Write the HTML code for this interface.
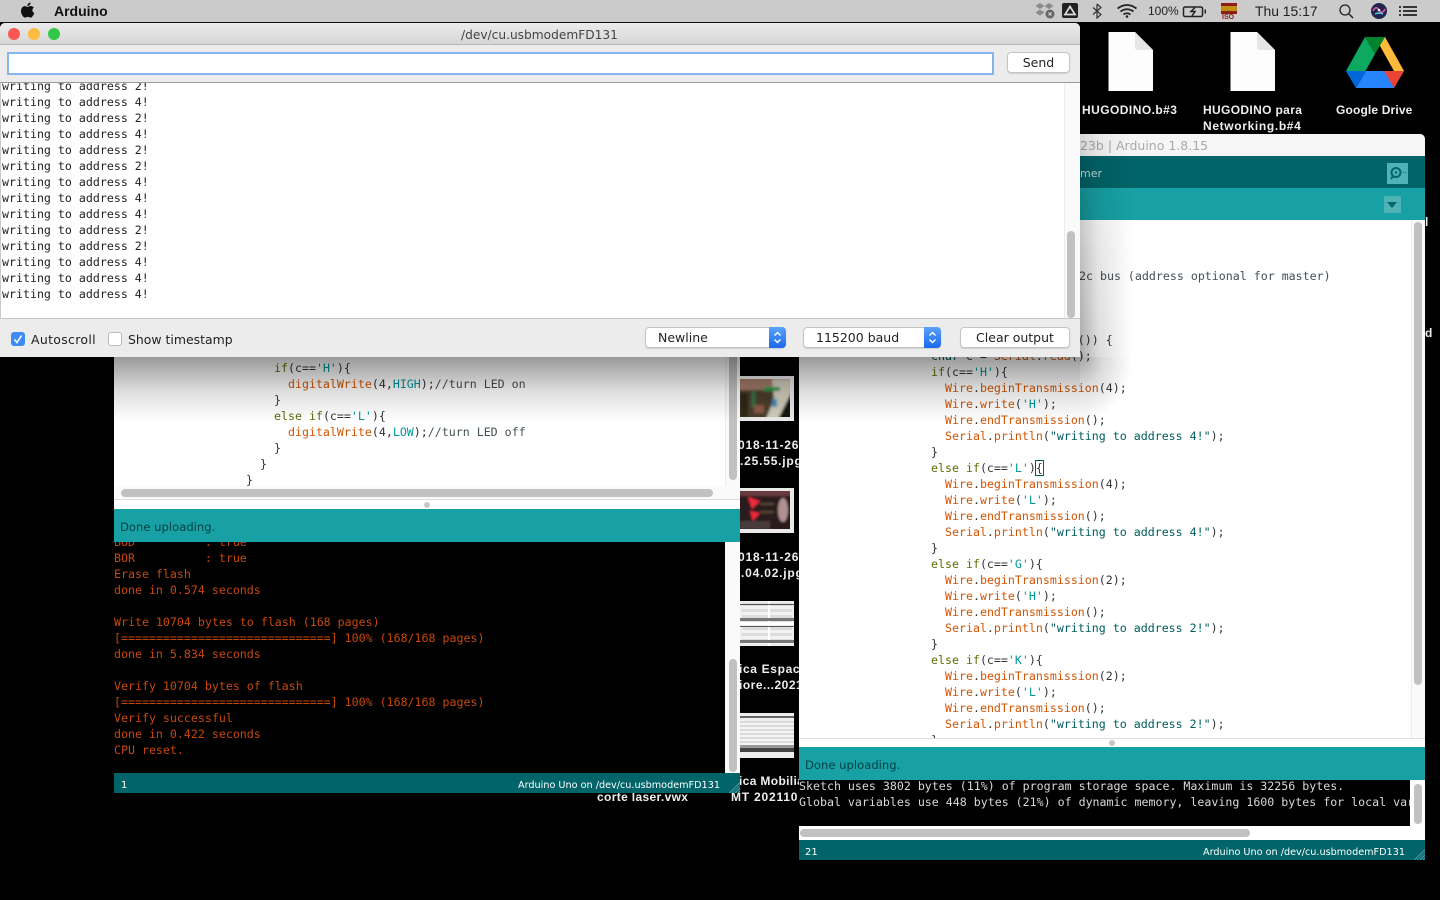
<!DOCTYPE html>
<html><head><meta charset="utf-8"><style>
html,body{margin:0;padding:0;background:#000;width:1440px;height:900px;overflow:hidden}
.a{position:absolute}
pre{position:absolute;margin:0;font:11.62px/16px "DejaVu Sans Mono","Liberation Mono",monospace;color:#333}
.s{font-family:"DejaVu Sans","Liberation Sans",sans-serif;white-space:pre}
.b{font:bold 12px/16px "Liberation Sans",sans-serif;color:#eee;white-space:pre;position:absolute;letter-spacing:.45px}
.k{color:#5E6D03}.f{color:#D35400}.c{color:#00979C}.t{color:#005C5F}.m{color:#434F54}
.btn{position:absolute;background:#fff;border:1px solid #c4c4c4;border-radius:4px;box-sizing:border-box;font:12.5px/20px "DejaVu Sans",sans-serif;color:#222;box-shadow:0 1px 1px rgba(0,0,0,.12)}
.sp{position:absolute;top:-1px;right:-1px;width:17px;height:21px;background:linear-gradient(#5aa2fb,#1a68ee);border-radius:0 4px 4px 0}
.th{position:absolute;left:740px;width:54px;height:45px;overflow:hidden;background:#e9e9e9}
</style></head><body>

<!-- Desktop icons -->
<svg class="a" style="left:1100px;top:26px" width="320" height="70" viewBox="0 0 320 70">
<path d="M8.500 6H35L53 24V65H8.500Z" fill="#fdfdfd"/><path d="M35 6L53 24H38Q35 24 35 21Z" fill="#e6e6e6"/>
<path d="M130.500 6H157L175 24V65H130.500Z" fill="#fdfdfd"/><path d="M157 6L175 24H160Q157 24 157 21Z" fill="#e6e6e6"/>
<path d="M265 11H285L304 45L294 45L275 11Z" fill="#FFBA3C"/>
<path d="M265 11L246 45L256 62L275 28Z" fill="#0DA960"/>
<path d="M265 11H285L275 28Z" fill="#00832D"/>
<path d="M256 62H294L304 45H266Z" fill="#2684FC"/>
<path d="M246 45L256 62L266 45Z" fill="#0066DA"/>
<path d="M284 45H304L294 62Z" fill="#EA4335"/>
</svg>
<div class="b" style="left:1082px;top:102px">HUGODINO.b#3</div>
<div class="b" style="left:1203px;top:102px;letter-spacing:.35px">HUGODINO para</div>
<div class="b" style="left:1203px;top:118px;letter-spacing:.65px">Networking.b#4</div>
<div class="b" style="left:1336px;top:102px;letter-spacing:.15px">Google Drive</div>

<!-- Thumbnail column -->
<div class="th" style="top:376px"><svg class="a" style="left:0;top:3px" width="50" height="38" viewBox="0 0 50 38"><defs><filter id="bl"><feGaussianBlur stdDeviation="1.200"/></filter></defs><rect width="50" height="38" fill="#4a3c2c"/><g filter="url(#bl)"><rect x="-2" y="-2" width="54" height="42" fill="#4a3c2c"/><rect x="-2" y="-2" width="54" height="13" fill="#a07a68"/><path d="M32 0H52V12L38 40H26L34 20Z" fill="#cfcbbb"/><path d="M38 40L52 14V40Z" fill="#141410"/><rect x="24" y="8" width="16" height="4" fill="#1e9a4a"/><rect x="12" y="12" width="3" height="16" fill="#2a7a4a"/><rect x="32" y="20" width="5" height="8" fill="#3a8ab8"/><rect x="14" y="26" width="10" height="8" fill="#8a5a4a"/><rect x="0" y="14" width="8" height="24" fill="#2e2618"/></g></svg></div>
<div class="th" style="top:488px"><svg class="a" style="left:0;top:3px" width="50" height="38" viewBox="0 0 50 38"><defs><filter id="bm"><feGaussianBlur stdDeviation="1"/></filter></defs><rect width="50" height="38" fill="#2a1c1c"/><g filter="url(#bm)"><rect x="-2" y="-2" width="54" height="42" fill="#2a1c1c"/><rect x="-2" y="-2" width="54" height="7" fill="#6a3a40"/><ellipse cx="43" cy="19" rx="5" ry="12" fill="#b09090"/><rect x="20" y="12" width="14" height="2" fill="#5a4a3a"/><rect x="20" y="20" width="14" height="2" fill="#5a4a3a"/><path d="M8 6L20 10L12 18Z" fill="#f02c3a"/><path d="M10 20L20 22L13 30Z" fill="#f02c3a"/><rect x="0" y="30" width="30" height="8" fill="#4a3a3a"/></g></svg></div>
<div class="th" style="top:601px;background:#eee"><div class="a" style="left:2px;top:2px;width:50px;height:41px;background:repeating-linear-gradient(#dcdcdc 0 3px,#f2f2f2 3px 6px)"></div><div class="a" style="left:28px;top:0;width:2px;height:45px;background:#fff"></div><div class="a" style="left:0;top:21px;width:54px;height:3px;background:#fff"></div><div class="a" style="left:0;top:17px;width:54px;height:3px;background:#777"></div><div class="a" style="left:0;top:39px;width:54px;height:3px;background:#777"></div><div class="a" style="left:0;top:3px;width:54px;height:1px;background:#555"></div><div class="a" style="left:0;top:25px;width:54px;height:1px;background:#555"></div></div>
<div class="th" style="top:713px;background:#eee"><div class="a" style="left:0;top:3px;width:54px;height:2px;background:#666"></div><div class="a" style="left:0;top:8px;width:54px;height:24px;background:repeating-linear-gradient(#dadada 0 2px,#f4f4f4 2px 4px)"></div><div class="a" style="left:0;top:32px;width:54px;height:3px;background:#999"></div><div class="a" style="left:0;top:35px;width:54px;height:4px;background:#444"></div></div>
<div class="a" style="left:740px;top:437px;width:59px;height:370px;overflow:hidden">
<div class="b" style="left:-2px;top:0;letter-spacing:.8px">018-11-26</div>
<div class="b" style="left:0;top:16px;letter-spacing:.8px">.25.55.jpg</div>
<div class="b" style="left:-2px;top:112px;letter-spacing:.8px">018-11-26</div>
<div class="b" style="left:1px;top:128px;letter-spacing:.8px">.04.02.jpg</div>
<div class="b" style="left:-1px;top:224px;letter-spacing:.65px">ica Espac</div>
<div class="b" style="left:-1px;top:240px;letter-spacing:.5px">iore...2021</div>
<div class="b" style="left:-1px;top:336px;letter-spacing:.35px">ica Mobilia</div>
</div>
<div class="b" style="left:731px;top:789px;letter-spacing:.8px">MT 202110</div>
<div class="b" style="left:597px;top:789px;letter-spacing:.35px">corte laser.vwx</div>
<div class="b" style="left:1425px;top:325px">d</div>
<div class="b" style="left:1425px;top:214px">l</div>

<!-- Right Arduino window -->
<div class="a" style="left:799px;top:134px;width:626px;height:726px;background:#fff;overflow:hidden;border-radius:5px 5px 0 0">
 <div class="a" style="left:0;top:0;width:626px;height:22px;background:#f6f6f6"></div>
 <div class="a s" style="left:281px;top:4px;font-size:12.5px;line-height:16px;color:#a9a9a9">23b | Arduino 1.8.15</div>
 <div class="a" style="left:0;top:22px;width:626px;height:32px;background:#006468"></div>
 <div class="a s" style="left:281px;top:32px;font-size:11px;line-height:16px;color:#c4dcdc">mer</div>
 <div class="a" style="left:588px;top:29px;width:21px;height:21px;background:#4eb3b6"></div>
 <svg class="a" style="left:588px;top:29px" width="21" height="21"><circle cx="9" cy="9.500" r="4.500" fill="none" stroke="#006468" stroke-width="2"/><circle cx="9" cy="9.500" r="1.200" fill="#006468"/><path d="M6 13L4 16" stroke="#006468" stroke-width="2"/><path d="M16 9.500h1M18.500 9.500h1" stroke="#006468"/></svg>
 <div class="a" style="left:0;top:54px;width:626px;height:32px;background:#17A1A5"></div>
 <div class="a" style="left:585px;top:62px;width:17px;height:17px;background:#4eb3b6"></div>
 <div class="a" style="left:588px;top:68px;width:0;height:0;border:5.500px solid transparent;border-top:6px solid #006468;border-bottom:0"></div>
 <div class="a" style="left:612px;top:86px;width:14px;height:518px;background:#fafafa;border-left:1px solid #ececec;box-sizing:border-box"></div>
 <div class="a" style="left:615px;top:88px;width:8px;height:463px;background:#c1c1c1;border-radius:4px"></div>
</div>
<pre style="left:1079px;top:268px"><span class="m">2c bus (address optional for master)</span></pre>
<pre style="left:917px;top:332px"><span class="k">while</span> (<span class="f">Serial</span>.<span class="f">available</span>()) {</pre>
<pre style="left:931px;top:348px"><span class="t">char</span> c = <span class="f">Serial</span>.<span class="f">read</span>();</pre>
<div class="a" style="left:799px;top:364px;width:613px;height:374px;overflow:hidden">
<pre style="left:132px;top:0"><span class="k">if</span>(c==<span class="c">'H'</span>){
  <span class="f">Wire</span>.<span class="f">beginTransmission</span>(4);
  <span class="f">Wire</span>.<span class="f">write</span>(<span class="c">'H'</span>);
  <span class="f">Wire</span>.<span class="f">endTransmission</span>();
  <span class="f">Serial</span>.<span class="f">println</span>(<span class="t">"writing to address 4!"</span>);
}
<span class="k">else if</span>(c==<span class="c">'L'</span>){
  <span class="f">Wire</span>.<span class="f">beginTransmission</span>(4);
  <span class="f">Wire</span>.<span class="f">write</span>(<span class="c">'L'</span>);
  <span class="f">Wire</span>.<span class="f">endTransmission</span>();
  <span class="f">Serial</span>.<span class="f">println</span>(<span class="t">"writing to address 4!"</span>);
}
<span class="k">else if</span>(c==<span class="c">'G'</span>){
  <span class="f">Wire</span>.<span class="f">beginTransmission</span>(2);
  <span class="f">Wire</span>.<span class="f">write</span>(<span class="c">'H'</span>);
  <span class="f">Wire</span>.<span class="f">endTransmission</span>();
  <span class="f">Serial</span>.<span class="f">println</span>(<span class="t">"writing to address 2!"</span>);
}
<span class="k">else if</span>(c==<span class="c">'K'</span>){
  <span class="f">Wire</span>.<span class="f">beginTransmission</span>(2);
  <span class="f">Wire</span>.<span class="f">write</span>(<span class="c">'L'</span>);
  <span class="f">Wire</span>.<span class="f">endTransmission</span>();
  <span class="f">Serial</span>.<span class="f">println</span>(<span class="t">"writing to address 2!"</span>);
}</pre>
<div class="a" style="left:236px;top:96px;width:7px;height:14px;border:1px solid #005C5F"></div>
</div>
<div class="a" style="left:799px;top:738px;width:626px;height:1px;background:#ddd"></div>
<div class="a" style="left:1109px;top:740px;width:6px;height:6px;border-radius:50%;background:#c8c8c8"></div>
<div class="a" style="left:799px;top:747px;width:626px;height:33px;background:#17A1A5"></div>
<div class="a s" style="left:805px;top:757px;font-size:11.6px;line-height:16px;color:#034246">Done uploading.</div>
<div class="a" style="left:799px;top:780px;width:611px;height:46px;background:#000;overflow:hidden">
<pre style="left:0;top:-2px;color:#d8d8d8">Sketch uses 3802 bytes (11%) of program storage space. Maximum is 32256 bytes.
Global variables use 448 bytes (21%) of dynamic memory, leaving 1600 bytes for local variables. Maximum is 2048 bytes.</pre>
</div>
<div class="a" style="left:1410px;top:780px;width:15px;height:60px;background:#fff"></div>
<div class="a" style="left:1414px;top:784px;width:8px;height:40px;background:#c1c1c1;border-radius:4px"></div>
<div class="a" style="left:799px;top:826px;width:626px;height:14px;background:#fff"></div>
<div class="a" style="left:800px;top:829px;width:450px;height:8px;background:#c1c1c1;border-radius:4px"></div>
<div class="a" style="left:799px;top:840px;width:626px;height:20px;background:#006468"></div>
<div class="a s" style="left:805px;top:846px;font-size:10px;line-height:14px;color:#fff">21</div>
<div class="a s" style="left:1203px;top:846px;font-size:9.67px;line-height:14px;color:#fff">Arduino Uno on /dev/cu.usbmodemFD131</div>
<div class="a" style="left:1413px;top:848px;width:12px;height:12px;background:repeating-linear-gradient(135deg,#006468 0 1px,#4a9a9d 1px 2px);clip-path:polygon(100% 0,100% 100%,0 100%)"></div>

<!-- Left Arduino window -->
<div class="a" style="left:114px;top:340px;width:626px;height:169px;background:#fff;overflow:hidden">
<pre style="left:160px;top:20px"><span class="k">if</span>(c==<span class="c">'H'</span>){
  <span class="f">digitalWrite</span>(4,<span class="c">HIGH</span>);<span class="m">//turn LED on</span>
}
<span class="k">else if</span>(c==<span class="c">'L'</span>){
  <span class="f">digitalWrite</span>(4,<span class="c">LOW</span>);<span class="m">//turn LED off</span>
}</pre>
<pre style="left:146px;top:116px">}</pre>
<pre style="left:132px;top:132px;height:14px;overflow:hidden">}</pre>
<div class="a" style="left:611px;top:0;width:15px;height:146px;background:#fafafa;border-left:1px solid #ececec;box-sizing:border-box"></div>
<div class="a" style="left:615px;top:0;width:8px;height:140px;background:#c1c1c1;border-radius:4px"></div>
<div class="a" style="left:0;top:146px;width:626px;height:13px;background:#fafafa"></div>
<div class="a" style="left:7px;top:149px;width:592px;height:8px;background:#c1c1c1;border-radius:4px"></div>
<div class="a" style="left:0;top:159px;width:626px;height:1px;background:#ddd"></div>
<div class="a" style="left:310px;top:162px;width:6px;height:6px;border-radius:50%;background:#c8c8c8"></div>
</div>
<div class="a" style="left:114px;top:509px;width:626px;height:33px;background:#17A1A5"></div>
<div class="a s" style="left:120px;top:519px;font-size:11.6px;line-height:16px;color:#034246">Done uploading.</div>
<div class="a" style="left:114px;top:542px;width:611px;height:231px;background:#000;overflow:hidden">
<pre style="left:0;top:-8px;color:#C8480B">BOD          : true
BOR          : true
Erase flash
done in 0.574 seconds

Write 10704 bytes to flash (168 pages)
[==============================] 100% (168/168 pages)
done in 5.834 seconds

Verify 10704 bytes of flash
[==============================] 100% (168/168 pages)
Verify successful
done in 0.422 seconds
CPU reset.</pre>
</div>
<div class="a" style="left:725px;top:542px;width:15px;height:231px;background:#fafafa"></div>
<div class="a" style="left:729px;top:659px;width:8px;height:113px;background:#c1c1c1;border-radius:4px"></div>
<div class="a" style="left:114px;top:773px;width:626px;height:20px;background:#006468"></div>
<div class="a s" style="left:121px;top:779px;font-size:10px;line-height:14px;color:#fff">1</div>
<div class="a s" style="left:518px;top:779px;font-size:9.67px;line-height:14px;color:#fff">Arduino Uno on /dev/cu.usbmodemFD131</div>
<div class="a" style="left:728px;top:781px;width:12px;height:12px;background:repeating-linear-gradient(135deg,#006468 0 1px,#4a9a9d 1px 2px);clip-path:polygon(100% 0,100% 100%,0 100%)"></div>

<!-- Serial window shadow: explicit gradients -->
<div class="a" style="left:0;top:357px;width:1080px;height:65px;background:linear-gradient(rgba(0,0,0,.4),rgba(0,0,0,.27) 25%,rgba(0,0,0,.12) 55%,rgba(0,0,0,0))"></div>
<div class="a" style="left:1080px;top:134px;width:52px;height:223px;background:linear-gradient(90deg,rgba(0,0,0,.34),rgba(0,0,0,.14) 35%,rgba(0,0,0,0));-webkit-mask-image:linear-gradient(rgba(0,0,0,.4),#000);mask-image:linear-gradient(rgba(0,0,0,.4),#000)"></div>
<div class="a" style="left:1080px;top:357px;width:52px;height:65px;background:radial-gradient(ellipse 52px 65px at 0 0,rgba(0,0,0,.36),rgba(0,0,0,.14) 45%,rgba(0,0,0,0))"></div>

<!-- Serial monitor window -->
<div class="a" style="left:0;top:22px;width:1080px;height:1px;background:#111"></div>
<div class="a" style="left:0;top:23px;width:1080px;height:334px;background:#ececec;border-radius:5px 5px 0 0;overflow:hidden">
 <div class="a" style="left:0;top:0;width:1080px;height:21px;background:linear-gradient(#ececec,#d6d6d6);border-bottom:1px solid #b8b8b8"></div>
 <div class="a" style="left:8px;top:5px;width:12px;height:12px;border-radius:50%;background:#fc5753"></div>
 <div class="a" style="left:28px;top:5px;width:12px;height:12px;border-radius:50%;background:#fdbc40"></div>
 <div class="a" style="left:48px;top:5px;width:12px;height:12px;border-radius:50%;background:#33c748"></div>
 <div class="a s" style="left:461px;top:4px;font-size:12.2px;line-height:16px;color:#444">/dev/cu.usbmodemFD131</div>
 <div class="a" style="left:7px;top:29px;width:987px;height:23px;background:#fff;border:2px solid #86b5ee;box-sizing:border-box"></div>
 <div class="btn" style="left:1007px;top:29px;width:63px;height:21px;text-align:center">Send</div>
 <div class="a" style="left:0;top:59px;width:1080px;height:237px;background:#fff;border-top:1px solid #9a9a9a;border-bottom:1px solid #c8c8c8;border-left:1px solid #ccc;box-sizing:border-box;overflow:hidden">
<pre style="left:1px;top:-5px;color:#222">writing to address 2!
writing to address 4!
writing to address 2!
writing to address 4!
writing to address 2!
writing to address 2!
writing to address 4!
writing to address 4!
writing to address 4!
writing to address 2!
writing to address 2!
writing to address 4!
writing to address 4!
writing to address 4!</pre>
  <div class="a" style="left:1063px;top:0;width:16px;height:236px;background:#fafafa;border-left:1px solid #ececec;box-sizing:border-box"></div>
  <div class="a" style="left:1066px;top:148px;width:8px;height:87px;background:#c1c1c1;border-radius:4px"></div>
 </div>
 <div class="a" style="left:11px;top:309px;width:14px;height:14px;border-radius:3px;background:#3d8cf5"></div>
 <svg class="a" style="left:11px;top:309px" width="14" height="14"><path d="M3.500 7.500L6 10.500L10.500 3.500" fill="none" stroke="#fff" stroke-width="1.600"/></svg>
 <div class="a s" style="left:31px;top:309px;font-size:12.5px;line-height:16px;color:#222;letter-spacing:.3px">Autoscroll</div>
 <div class="a" style="left:108px;top:309px;width:14px;height:14px;border-radius:3px;background:#fff;border:1px solid #bbb;box-sizing:border-box"></div>
 <div class="a s" style="left:128px;top:309px;font-size:12.45px;line-height:16px;color:#222">Show timestamp</div>
 <div class="btn" style="left:645px;top:304px;width:141px;height:21px;padding-left:12px">Newline<div class="sp"><svg width="17" height="21"><path d="M5.500 8.500L8.500 5.500L11.500 8.500M5.500 12.500L8.500 15.500L11.500 12.500" fill="none" stroke="#fff" stroke-width="1.400"/></svg></div></div>
 <div class="btn" style="left:803px;top:304px;width:138px;height:21px;padding-left:12px">115200 baud<div class="sp"><svg width="17" height="21"><path d="M5.500 8.500L8.500 5.500L11.500 8.500M5.500 12.500L8.500 15.500L11.500 12.500" fill="none" stroke="#fff" stroke-width="1.400"/></svg></div></div>
 <div class="btn" style="left:960px;top:304px;width:110px;height:21px;text-align:center">Clear output</div>
</div>

<!-- Menu bar -->
<div class="a" style="left:0;top:0;width:1440px;height:22px;background:#cbcbcb"></div>
<svg class="a" style="left:20px;top:2px" width="15" height="17" viewBox="0 0 15 17"><path d="M10.600 0.500C10.700 2.400 9 4 7.400 3.900 7.200 2.200 8.900 .6 10.600 .5ZM7.500 4.900C8.300 4.900 9.300 4 10.700 4 11.900 4 13.100 4.600 13.800 5.700 11.600 7 12 10.100 14.300 11 13.700 12.700 12.100 15.600 10.600 15.600 9.600 15.600 9.100 14.900 7.800 14.900 6.500 14.900 6 15.600 5 15.600 3.400 15.600 1 12.200 1 9 1 5.900 3 4.100 5 4.100 6 4.100 6.800 4.900 7.500 4.900Z" fill="#111"/></svg>
<div class="a" style="left:54px;top:2px;font:bold 14px/18px 'Liberation Sans',sans-serif;color:#111">Arduino</div>
<svg class="a" style="left:1030px;top:0" width="390" height="22" viewBox="0 0 390 22">
<path d="M10 3l4.500 3-4.500 3-4.500-3zM19 3l4.500 3-4.500 3-4.500-3zM10 9.500l4.500 3-4.500 3-4.500-3z" fill="#8a8a8a"/><circle cx="20" cy="14" r="4.500" fill="#666"/><path d="M18.500 12.500l3 3M21.500 12.500l-3 3" stroke="#ddd"/>
<rect x="32" y="3" width="16" height="15" rx="2" fill="#222"/><path d="M40 6.500L45 14.500H35Z" fill="none" stroke="#ddd" stroke-width="1.700"/>
<path d="M67 4v14l4-3.500-8-7M67 4l4 3.500-8 7" fill="none" stroke="#333" stroke-width="1.200"/>
<path d="M87.500 8.500q9.500-7 19 0M90.500 11.500q6.500-4.500 13 0M93.500 14.500q3.500-2.500 7 0" fill="none" stroke="#222" stroke-width="1.800"/><circle cx="97" cy="16.500" r="1.300" fill="#222"/>
<rect x="153.500" y="7" width="19" height="9.500" rx="1.500" fill="none" stroke="#222" stroke-width="1.500"/><path d="M165 7.500l-4 4h4l-3 4.500" fill="none" stroke="#222" stroke-width="1.500"/><rect x="174.500" y="9.500" width="1.500" height="4" fill="#222"/>
<rect x="191" y="3" width="16" height="3" fill="#8e1c12"/><rect x="191" y="6" width="16" height="5" fill="#c09010"/><rect x="191" y="11" width="16" height="3" fill="#8e1c12"/>
<circle cx="315" cy="10" r="5" fill="none" stroke="#222" stroke-width="1.300"/><path d="M319 14l4 4" stroke="#222" stroke-width="1.500"/>
<circle cx="349" cy="11" r="8" fill="#22264e"/><path d="M343 11q3-6 6-1t6-1" stroke="#e05aa0" stroke-width="1.500" fill="none"/><path d="M345 14q4-2 8 0" stroke="#5ac8e0" stroke-width="1.500" fill="none"/><circle cx="349" cy="10" r="1.300" fill="#eee"/>
<path d="M369 7h2M373 7h14M369 11h2M373 11h14M369 15h2M373 15h14" stroke="#222" stroke-width="1.800"/>
</svg>
<div class="a s" style="left:1148px;top:3px;font:12px/16px 'Liberation Sans',sans-serif;color:#222">100%</div>
<div class="a" style="left:1222px;top:14px;font:bold 7px/7px 'Liberation Sans',sans-serif;color:#8a1a1a">ISO</div>
<div class="a" style="left:1255px;top:3px;font:13.9px/16px 'Liberation Sans',sans-serif;color:#222">Thu 15:17</div>
</body></html>
